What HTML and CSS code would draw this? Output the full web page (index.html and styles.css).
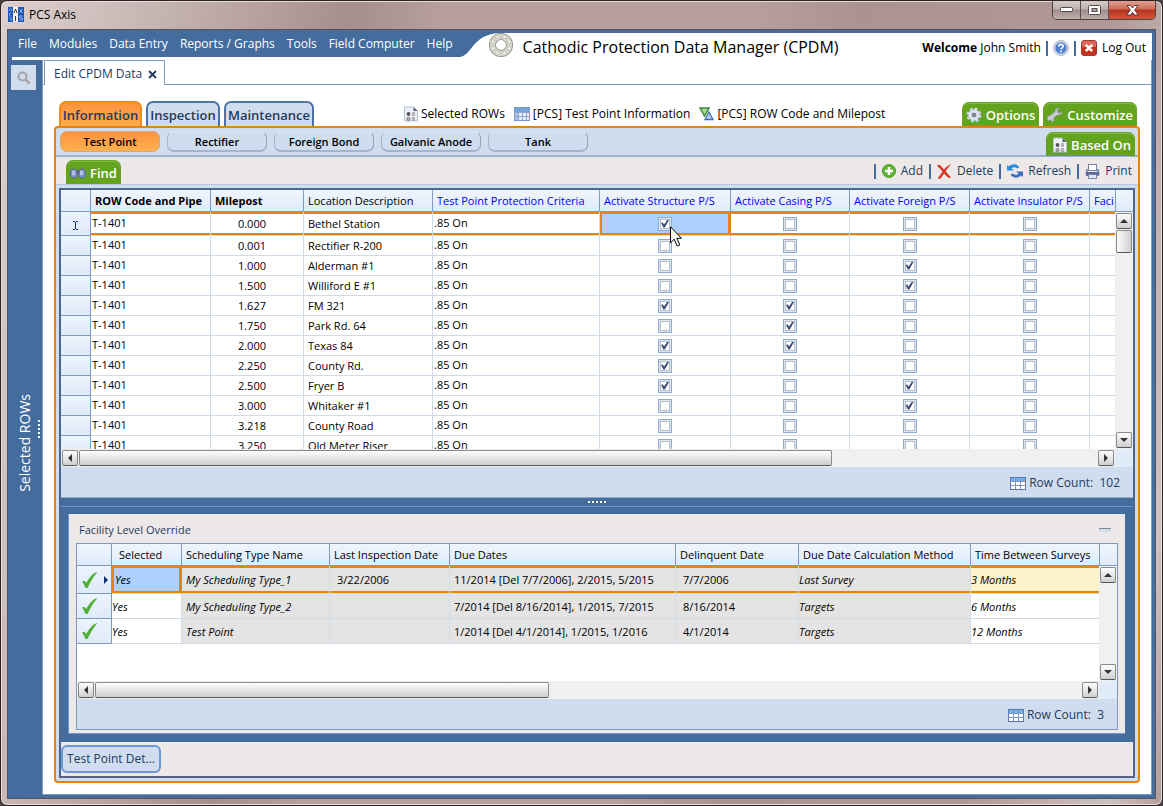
FILE: index.html
```html
<!DOCTYPE html>
<html lang="en">
<head>
    <meta charset="UTF-8">
    <meta name="viewport" content="width=device-width, initial-scale=1.0">
    <title>PCS Axis</title>
    <link rel="stylesheet" href="styles.css">
</head>
<body>
<div class="window">
    <div class="titlebar">
        <svg class="app-icon" width="16" height="16" viewBox="0 0 16 16">
            <rect width="5" height="15" fill="#1c57b8"/><rect x="5" width="5" height="15" fill="#f4f4f4"/><rect x="10" width="6" height="15" fill="#1c57b8"/>
            <path d="M1.5 4V2h2v2M3.500 6h-2v3h2M1.500 11h2v2h-2" stroke="#6f9be0" fill="none"/>
            <path d="M6 6l1.500-4L9 6M7.500 9v5" stroke="#333" fill="none"/>
            <path d="M11.500 2l3 4M14.500 2l-3 4M14.500 9h-3v2h3v2h-3" stroke="#8fb4ee" fill="none"/>
        </svg>
        <span class="app-name">PCS Axis</span>
        <div class="window-buttons">
            <button type="button" class="win-btn" aria-label="Minimize"><svg width="13" height="6" viewBox="0 0 13 6"><rect x=".5" y=".5" width="12" height="4" rx="1" fill="#fff" stroke="#55494c"/></svg></button>
            <button type="button" class="win-btn" aria-label="Maximize"><svg width="13" height="11" viewBox="0 0 13 11"><rect x=".5" y=".5" width="12" height="9" rx="1" fill="#fff" stroke="#55494c"/><rect x="4" y="3.500" width="5" height="3" fill="#b9a5a5" stroke="#55494c"/></svg></button>
            <button type="button" class="win-btn win-close" aria-label="Close"><svg width="13" height="11" viewBox="0 0 13 11"><path d="M1 .5h3.500l2 2.500 2-2.500H12L8.700 5l3.500 5H8.500l-2-2.700-2 2.700H.8L4.300 5z" fill="#fff" stroke="#5a3a3c"/></svg></button>
        </div>
    </div>

    <div class="client">
        <header class="header">
            <nav class="menu">
                <a href="#">File</a>
                <a href="#">Modules</a>
                <a href="#">Data Entry</a>
                <a href="#">Reports / Graphs</a>
                <a href="#">Tools</a>
                <a href="#">Field Computer</a>
                <a href="#">Help</a>
            </nav>
            <svg class="swoosh" width="40" height="24" viewBox="0 0 40 24"><path d="M0 0h40C26 1 20 6 14 13 10 18 6 24 0 24z" fill="#446c9d"/></svg>
            <svg class="flange" width="24" height="24" viewBox="0 0 24 24">
                <circle cx="12" cy="12" r="8.500" fill="none" stroke="#8b8b82" stroke-width="7"/>
                <circle cx="12" cy="12" r="8.500" fill="none" stroke="#d3d4c8" stroke-width="5.500"/>
                <g fill="#fff" stroke="#b2b3a8" stroke-width=".5"><circle cx="15.400" cy="3.800" r="1.400"/><circle cx="20.200" cy="8.600" r="1.400"/><circle cx="20.200" cy="15.400" r="1.400"/><circle cx="15.400" cy="20.200" r="1.400"/><circle cx="8.600" cy="20.200" r="1.400"/><circle cx="3.800" cy="15.400" r="1.400"/><circle cx="3.800" cy="8.600" r="1.400"/><circle cx="8.600" cy="3.800" r="1.400"/></g>
            </svg>
            <h1>Cathodic Protection Data Manager (CPDM)</h1>
            <div class="user-area">
                <span><b>Welcome</b> John Smith</span>
                <i class="sep"></i>
                <button type="button" class="icon-btn" aria-label="Help">
                    <svg width="16" height="16" viewBox="0 0 16 16"><circle cx="8" cy="8" r="7.500" fill="#d5d9e2" stroke="#b8bdc9"/><circle cx="8" cy="8" r="5.700" fill="#4f7fd6"/><path d="M5.800 6.500C5.800 3.700 10.300 3.800 10.200 6.300 10.100 7.800 8 7.800 8 9.600" fill="none" stroke="#fff" stroke-width="1.600"/><circle cx="8" cy="11.600" r="1" fill="#fff"/></svg>
                </button>
                <i class="sep"></i>
                <a href="#" class="logout">
                    <svg width="16" height="16" viewBox="0 0 16 16"><rect x=".5" y=".5" width="15" height="15" rx="2.500" fill="#c5301f" stroke="#a33a30"/><path d="M1 3a2 2 0 0 1 2-2h10a2 2 0 0 1 2 2v4H1z" fill="#dc6a5a"/><path d="M4.800 4.800l6.400 6.400M11.200 4.800l-6.400 6.400" stroke="#fff" stroke-width="2.600"/></svg>
                    Log Out
                </a>
            </div>
        </header>
        <div class="strip"></div>

        <div class="main-row">
            <aside class="sidebar">
                <button type="button" class="search-btn" aria-label="Search">
                    <svg width="14" height="14" viewBox="0 0 14 14" fill="none" stroke="#a3a5a8"><circle cx="5.500" cy="5.500" r="4" stroke-width="2"/><path d="M8.500 8.500l4 4" stroke-width="2.600"/></svg>
                </button>
                <span class="side-label">Selected ROWs</span>
                <i class="side-grip"></i>
            </aside>

            <main class="content">
                <div class="doc-tabs">
                    <div class="doc-tab">
                        <span>Edit CPDM Data</span>
                        <button type="button" class="close-tab" aria-label="Close tab"><svg width="9" height="9" viewBox="0 0 9 9"><path d="M1 1l7 7M8 1L1 8" stroke="#1f3a5f" stroke-width="1.800"/></svg></button>
                    </div>
                </div>

                <div class="top-bar">
                    <button type="button" class="tab tab-info active">Information</button>
                    <button type="button" class="tab tab-insp">Inspection</button>
                    <button type="button" class="tab tab-maint">Maintenance</button>
                    <div class="links">
                        <a href="#"><svg width="14" height="16" viewBox="0 0 14 16"><path d="M.5 1h9l4 4v10H.5z" fill="#eef2f8" stroke="#b4c0d0"/><path d="M9.500 1l4 4h-4z" fill="#4a6078"/><circle cx="4.500" cy="8" r="1.900" fill="#555"/><circle cx="4.500" cy="13" r="1.600" fill="#bbb" stroke="#777"/><path d="M8 7h3M8 9h3M8 12h3M8 14h3" stroke="#777"/></svg>Selected ROWs</a>
                        <a href="#"><svg width="16" height="14" viewBox="0 0 16 14"><rect x=".5" y=".5" width="15" height="13" fill="#e8eef8" stroke="#7a9bc6"/><path d="M1 1h14v4H1z" fill="#6fa3dc"/><path d="M1 5h4v8H1z" fill="#a9c4e8"/><path d="M0 5.500h16M0 9.500h16M4.500 1v12M8.500 1v12M12.500 1v12" stroke="#8aa5cf"/></svg>[PCS] Test Point Information</a>
                        <a href="#"><svg width="15" height="14" viewBox="0 0 15 14"><path d="M1 1h9L5.500 9z" fill="#aad89a" stroke="#3d8c3a" stroke-width="1.500"/><path d="M10 5l4 7.500H6z" fill="#b9cdee" stroke="#4a6fb0" stroke-width="1.300"/></svg>[PCS] ROW Code and Milepost</a>
                    </div>
                    <button type="button" class="green-tab"><svg width="16" height="16" viewBox="0 0 16 16"><circle cx="8" cy="8" r="6" fill="none" stroke="#c9cde6" stroke-width="3" stroke-dasharray="2.700 2"/><circle cx="8" cy="8" r="4" fill="none" stroke="#dcdff0" stroke-width="3.500"/><circle cx="8" cy="8" r="2" fill="#7b84b0"/></svg>Options</button>
                    <button type="button" class="green-tab"><svg width="16" height="16" viewBox="0 0 16 16"><path d="M15 4.500l-2.600 1.700-2-1.200.1-2.300L13 1.200C10.500.4 8 2 7.700 5L3 8.700c-3-.3-3.500 4-1 5.300l1.600-1.200 1 .7-.2 1.700c2.500-.5 2.800-2.400 2.200-4.200L10.500 8c3 .3 4.800-1.300 4.500-3.500z" fill="#c9ccd6" stroke="#8b93a0" stroke-width=".6"/></svg>Customize</button>
                </div>

                <div class="panel">
                    <div class="sub-bar">
                        <button type="button" class="sub-tab active">Test Point</button>
                        <button type="button" class="sub-tab">Rectifier</button>
                        <button type="button" class="sub-tab">Foreign Bond</button>
                        <button type="button" class="sub-tab">Galvanic Anode</button>
                        <button type="button" class="sub-tab">Tank</button>
                        <button type="button" class="green-tab based-on"><svg width="14" height="16" viewBox="0 0 14 16"><path d="M.5 1h9l4 4v10H.5z" fill="#eef2f8" stroke="#b4c0d0"/><path d="M9.500 1l4 4h-4z" fill="#4a6078"/><circle cx="4.500" cy="8" r="1.900" fill="#555"/><circle cx="4.500" cy="13" r="1.600" fill="#bbb" stroke="#777"/><path d="M8 7h3M8 9h3M8 12h3M8 14h3" stroke="#777"/></svg>Based On</button>
                    </div>

                    <div class="tool-bar">
                        <button type="button" class="green-tab find"><svg width="16" height="12" viewBox="0 0 16 12"><ellipse cx="4" cy="6.500" rx="3.500" ry="4.500" fill="#7f95c4" stroke="#4f6190"/><ellipse cx="12" cy="6.500" rx="3.500" ry="4.500" fill="#7f95c4" stroke="#4f6190"/><ellipse cx="3.500" cy="6" rx="1.500" ry="2.500" fill="#b9c8e8"/><ellipse cx="11.500" cy="6" rx="1.500" ry="2.500" fill="#b9c8e8"/><rect x="6.500" y="3" width="3" height="4" rx="1" fill="#56678c"/></svg>Find</button>
                        <div class="actions">
                            <i class="sep"></i>
                            <button type="button"><svg width="14" height="14" viewBox="0 0 14 14"><circle cx="7" cy="7" r="6.500" fill="#5cb531" stroke="#469a28"/><path d="M7 3v8M3 7h8" stroke="#fff" stroke-width="2.600"/></svg>Add</button>
                            <i class="sep"></i>
                            <button type="button"><svg width="15" height="15" viewBox="0 0 15 15"><path d="M0 1.500C1 .5 2.500.5 3.500 1.500L7 5.500C9 3 11.500 1 14.500 0 12 2.500 10 4.800 8.500 7.200L14 13.500c-1.500.8-2.500.5-3.500-.5L7 9.500 4 14c-1 1-2.300 1-3.300.5L5.500 7.500z" fill="#d9321f"/></svg>Delete</button>
                            <i class="sep"></i>
                            <button type="button"><svg width="16" height="14" viewBox="0 0 16 14"><path d="M0 1l2 1.500C5-.5 10-.5 12.500 3.500L10 4.500C8 2.500 6 3 4.500 4.500L7 6.500H0z" fill="#2a8ce0"/><path d="M16 13l-2-1.500c-3 3-8 3-10.500-1L6 9.500c2 2 4 1.500 5.500 0L9 7.500h7z" fill="#3b6fc4"/></svg>Refresh</button>
                            <i class="sep"></i>
                            <button type="button"><svg width="15" height="15" viewBox="0 0 15 15"><rect x="3.500" y=".5" width="8" height="6" fill="#fff" stroke="#7584a8"/><path d="M1 5h2v3h9V5h2l.5 6h-14z" fill="#8795bd"/><rect x="1" y="8" width="13" height="4" rx="1" fill="#5b6c9c"/><rect x="3.500" y="10.500" width="8" height="4" fill="#dfe6f4" stroke="#7584a8"/></svg>Print</button>
                        </div>
                    </div>

                    <div class="work-area">
                        <section class="grid">
                            <div class="viewport">
                                <table class="points">
                                    <colgroup>
                                        <col class="c-head"><col class="c-code"><col class="c-mile"><col class="c-loc"><col class="c-crit"><col class="c-struct"><col class="c-casing"><col class="c-foreign"><col class="c-insul"><col>
                                    </colgroup>
                                    <thead>
                                        <tr>
                                            <th></th>
                                            <th class="bold">ROW Code and Pipe</th>
                                            <th class="bold">Milepost</th>
                                            <th>Location Description</th>
                                            <th class="blue">Test Point Protection Criteria</th>
                                            <th class="blue">Activate Structure P/S</th>
                                            <th class="blue">Activate Casing P/S</th>
                                            <th class="blue">Activate Foreign P/S</th>
                                            <th class="blue">Activate Insulator P/S</th>
                                            <th class="blue">Faci</th>
                                        </tr>
                                    </thead>
                                    <tbody id="points-body"></tbody>
                                </table>
                            </div>
                            <div class="vscroll">
                                <div class="vscroll-head"></div>
                                <button type="button" class="arrow up" aria-label="Scroll up"></button>
                                <div class="v-thumb"></div>
                                <button type="button" class="arrow down" aria-label="Scroll down"></button>
                            </div>
                            <div class="hscroll">
                                <button type="button" class="arrow left" aria-label="Scroll left"></button>
                                <div class="track"><div class="h-thumb wide"></div></div>
                                <button type="button" class="arrow right" aria-label="Scroll right"></button>
                            </div>
                            <div class="corner"></div>
                        </section>
                        <div class="row-count first">
                            <svg width="16" height="13" viewBox="0 0 16 13"><rect x=".5" y=".5" width="15" height="12" fill="#fff" stroke="#5a74b0"/><path d="M1 1h14v3H1z" fill="#6fb4e4"/><path d="M0 4.500h16M0 8.500h16M5.500 2v10M10.500 2v10" stroke="#7f93c4"/></svg>
                            Row Count:&nbsp; 102
                        </div>

                        <div class="splitter"><i class="grip"></i></div>

                        <div class="lower">
                            <section class="override">
                                <div class="override-head">
                                    <h2>Facility Level Override</h2>
                                    <button type="button" class="collapse" aria-label="Collapse"></button>
                                </div>
                                <div class="override-box">
                                    <div class="grid">
                                        <div class="viewport">
                                            <table class="schedule">
                                                <colgroup>
                                                    <col class="s-head"><col class="s-sel"><col class="s-name"><col class="s-last"><col class="s-due"><col class="s-del"><col class="s-calc"><col>
                                                </colgroup>
                                                <thead>
                                                    <tr>
                                                        <th></th>
                                                        <th>Selected</th>
                                                        <th>Scheduling Type Name</th>
                                                        <th>Last Inspection Date</th>
                                                        <th>Due Dates</th>
                                                        <th>Delinquent Date</th>
                                                        <th>Due Date Calculation Method</th>
                                                        <th>Time Between Surveys</th>
                                                    </tr>
                                                </thead>
                                                <tbody>
                                                    <tr class="current">
                                                        <td class="row-head"><svg width="18" height="18" viewBox="0 0 18 18"><path d="M1 10.500C2.500 9.500 4 9.500 5.300 12 8.500 6 12 2 16.500 1 12.500 5.500 9.500 10.500 6.500 17H4.500C3.500 14.500 2.500 12.500 1 10.500z" fill="#4eb034"/></svg><i class="marker"></i></td>
                                                        <td class="edit focus">Yes</td>
                                                        <td class="name">My Scheduling Type_1</td>
                                                        <td class="date">3/22/2006</td>
                                                        <td>11/2014 [Del 7/7/2006], 2/2015, 5/2015</td>
                                                        <td class="date">7/7/2006</td>
                                                        <td class="method">Last Survey</td>
                                                        <td class="edit pending">3 Months</td>
                                                    </tr>
                                                    <tr>
                                                        <td class="row-head"><svg width="18" height="18" viewBox="0 0 18 18"><path d="M1 10.500C2.500 9.500 4 9.500 5.300 12 8.500 6 12 2 16.500 1 12.500 5.500 9.500 10.500 6.500 17H4.500C3.500 14.500 2.500 12.500 1 10.500z" fill="#4eb034"/></svg></td>
                                                        <td class="edit">Yes</td>
                                                        <td class="name">My Scheduling Type_2</td>
                                                        <td class="date"></td>
                                                        <td>7/2014 [Del 8/16/2014], 1/2015, 7/2015</td>
                                                        <td class="date">8/16/2014</td>
                                                        <td class="method">Targets</td>
                                                        <td class="edit">6 Months</td>
                                                    </tr>
                                                    <tr>
                                                        <td class="row-head"><svg width="18" height="18" viewBox="0 0 18 18"><path d="M1 10.500C2.500 9.500 4 9.500 5.300 12 8.500 6 12 2 16.500 1 12.500 5.500 9.500 10.500 6.500 17H4.500C3.500 14.500 2.500 12.500 1 10.500z" fill="#4eb034"/></svg></td>
                                                        <td class="edit">Yes</td>
                                                        <td class="name">Test Point</td>
                                                        <td class="date"></td>
                                                        <td>1/2014 [Del 4/1/2014], 1/2015, 1/2016</td>
                                                        <td class="date">4/1/2014</td>
                                                        <td class="method">Targets</td>
                                                        <td class="edit">12 Months</td>
                                                    </tr>
                                                </tbody>
                                            </table>
                                        </div>
                                        <div class="vscroll">
                                            <div class="vscroll-head"></div>
                                            <button type="button" class="arrow up" aria-label="Scroll up"></button>
                                            <button type="button" class="arrow down" aria-label="Scroll down"></button>
                                        </div>
                                        <div class="hscroll">
                                            <button type="button" class="arrow left" aria-label="Scroll left"></button>
                                            <div class="track"><div class="h-thumb"></div></div>
                                            <button type="button" class="arrow right" aria-label="Scroll right"></button>
                                        </div>
                                        <div class="corner"></div>
                                    </div>
                                    <div class="row-count">
                                        <svg width="16" height="13" viewBox="0 0 16 13"><rect x=".5" y=".5" width="15" height="12" fill="#fff" stroke="#5a74b0"/><path d="M1 1h14v3H1z" fill="#6fb4e4"/><path d="M0 4.500h16M0 8.500h16M5.500 2v10M10.500 2v10" stroke="#7f93c4"/></svg>
                                        Row Count:&nbsp; 3
                                    </div>
                                </div>
                            </section>
                        </div>

                        <div class="details-bar">
                            <button type="button" class="details-btn">Test Point Det...</button>
                        </div>
                    </div>
                </div>
            </main>
        </div>
    </div>
</div>
<script src="script.js"></script>
</body>
</html>
```
FILE: styles.css
```css
* {
    margin: 0;
    padding: 0;
    box-sizing: border-box;
}
body {
    font-family: 'Open Sans', 'Noto Sans', sans-serif;
    font-size: 12px;
    line-height: 16px;
    color: #000;
    background-color: #4a4244;
}
button {
    font: inherit;
    color: inherit;
    background: none;
    border: none;
    cursor: pointer;
}
a {
    color: inherit;
    text-decoration: none;
}
svg {
    display: block;
    flex: none;
}

/* window frame */
.window {
    height: 100vh;
    min-height: 620px;
    display: flex;
    flex-direction: column;
    padding: 0 6px 6px;
    border: 1px solid #2b2022;
    border-radius: 7px;
    background: linear-gradient(100deg, #dccfcd 0, #cdbfbc 8%, #b7a19c 20%, #a58f8b 27%, #b7a09b 34%, #b7a09b 58%, #ab948f 66%, #b09994 85%, #cfc2c0 96%, #b39d98 100%);
    box-shadow: inset 0 0 0 1px #e9dedc;
}
.titlebar {
    height: 28px;
    flex: none;
    display: flex;
    align-items: flex-start;
}
.app-icon {
    margin: 6px 5px 0 1px;
}
.app-name {
    margin-top: 6px;
}
.window-buttons {
    margin-left: auto;
    display: flex;
    border: 1px solid #4c4043;
    border-top: none;
    border-radius: 0 0 5px 5px;
    overflow: hidden;
}
.win-btn {
    width: 28px;
    height: 18px;
    display: flex;
    align-items: center;
    justify-content: center;
    border-right: 1px solid #5c4f51;
    background: linear-gradient(#d6cbca 0, #bfb0ae 45%, #a08d8c 50%, #bfaeac 100%);
}
.win-close {
    width: 46px;
    border-right: none;
    background: linear-gradient(#e3a193 0, #cf6a56 45%, #b5331c 50%, #d2573f 100%);
}
.client {
    flex: 1;
    min-height: 0;
    display: flex;
    flex-direction: column;
    padding: 0 3px 3px 0;
    border: 1px solid #5d5158;
    background-color: #446c9d;
}

/* header */
.header {
    flex: none;
    height: 27px;
    display: flex;
    border-top: 3px solid #446c9d;
    background-color: #fff;
}
.menu {
    display: flex;
    gap: 12px;
    padding: 3px 6px 0 10px;
    background-color: #446c9d;
    color: #fff;
    white-space: nowrap;
}
.flange {
    margin-left: -10px;
}
.header h1 {
    margin-left: 10px;
    font-size: 16px;
    line-height: 28px;
    font-weight: normal;
    white-space: nowrap;
}
.user-area {
    margin: 6px 6px 0 auto;
    display: flex;
    align-items: center;
    height: 18px;
    gap: 5px;
    white-space: nowrap;
}
.sep {
    width: 2px;
    height: 15px;
    background-color: #446c9d;
}
.logout {
    display: flex;
    gap: 5px;
}
.strip {
    flex: none;
    height: 3px;
    margin-left: 4px;
    background-color: #fff;
}

/* sidebar */
.main-row {
    flex: 1;
    min-height: 0;
    display: flex;
}
.sidebar {
    position: relative;
    flex: none;
    width: 34px;
    display: flex;
    flex-direction: column;
    align-items: center;
}
.search-btn {
    width: 25px;
    height: 25px;
    margin: 5px 3px 0 0;
    display: flex;
    align-items: center;
    justify-content: center;
    background-color: #d0ddee;
}
.side-label {
    margin: auto 0;
    writing-mode: vertical-rl;
    transform: rotate(180deg);
    color: #fff;
    font-size: 14px;
}
.side-grip {
    position: absolute;
    right: 2px;
    top: 50%;
    width: 2px;
    height: 20px;
    margin-top: -8px;
    background: repeating-linear-gradient(#fff 0 2px, transparent 2px 4px);
}

/* content */
.content {
    flex: 1;
    min-width: 0;
    display: flex;
    flex-direction: column;
    border: 1px solid #7f9cc0;
    border-top: none;
    background-color: #fff;
}
.doc-tabs {
    flex: none;
    display: flex;
    height: 25px;
    border-bottom: 1px solid #8099bd;
}
.doc-tab {
    height: 25px;
    width: 121px;
    margin-left: 1px;
    padding: 2px 7px 0 9px;
    display: flex;
    align-items: center;
    justify-content: space-between;
    border: 1px solid #8099bd;
    border-bottom: none;
    background-color: #fff;
    color: #1f3a5f;
    white-space: nowrap;
}
.close-tab {
    display: flex;
}
.top-bar {
    flex: none;
    display: flex;
    align-items: flex-end;
    gap: 4px;
    height: 41px;
    padding: 0 14px 0 16px;
}
.tab {
    height: 25px;
    border: 2px solid #4b73a6;
    border-bottom: none;
    border-radius: 7px 7px 0 0;
    background-color: #d0ddee;
    color: #1f3a5f;
    font-size: 13px;
    font-weight: 600;
    white-space: nowrap;
}
.tab-info {
    width: 83px;
}
.tab-insp {
    width: 74px;
}
.tab-maint {
    width: 90px;
}
.tab.active {
    border-color: #f08a1c;
    background: linear-gradient(#fd9340, #ffab47);
}
.links {
    flex: 1;
    display: flex;
    gap: 9px;
    height: 25px;
    align-items: center;
    padding-left: 86px;
    white-space: nowrap;
}
.links a {
    display: flex;
    align-items: center;
    gap: 3px;
}
.green-tab {
    display: flex;
    align-items: center;
    gap: 4px;
    height: 24px;
    padding: 0 3px;
    border: 1px solid #64a31d;
    border-bottom: none;
    border-radius: 7px 7px 0 0;
    background-color: #64a31d;
    box-shadow: inset 0 1px 0 #82ba42;
    color: #fff;
    font-size: 13px;
    font-weight: 600;
    white-space: nowrap;
}

/* orange panel */
.panel {
    flex: 1;
    min-height: 0;
    margin: 0 11px 11px;
    display: flex;
    flex-direction: column;
    border: 2px solid #e8830e;
    border-radius: 4px;
    background-color: #d0ddee;
}
.sub-bar {
    flex: none;
    display: flex;
    gap: 7px;
    height: 29px;
    padding: 3px 3px 0 4px;
    border-bottom: 2px solid #9db3cb;
}
.sub-tab {
    width: 100px;
    height: 21px;
    border: 1px solid #a4b6ce;
    border-top-color: #dce8f5;
    border-right-color: #8fa3bd;
    border-bottom: 2px solid #a4b6ce;
    border-radius: 7px;
    background-color: #d0ddee;
    font-size: 11px;
    font-weight: 600;
    line-height: 17px;
}
.sub-tab.active {
    border: 1px solid #d9a878;
    background: linear-gradient(#fd9340, #ffb04d);
}
.based-on {
    margin: 1px 0 0 auto;
    padding: 0 3px 0 6px;
}
.tool-bar {
    flex: none;
    display: flex;
    align-items: flex-end;
    justify-content: space-between;
    height: 28px;
    padding: 0 6px 0 10px;
    border-bottom: 1px solid #b5c7dd;
    background-color: #ece9e8;
}
.actions {
    display: flex;
    align-items: center;
    gap: 6px;
    height: 26px;
    color: #1f3a5f;
}
.actions button {
    display: flex;
    align-items: center;
    gap: 5px;
}
.work-area {
    flex: 1;
    min-height: 0;
    margin: 3px;
    display: flex;
    flex-direction: column;
    border: 2px solid #4d6591;
    background-color: #ece9e8;
}

/* grids */
.grid {
    display: grid;
    grid-template-columns: minmax(0, 1fr) 18px;
    grid-template-rows: minmax(0, 1fr) 18px;
    background-color: #fff;
}
.work-area > .grid {
    flex: 1;
    min-height: 0;
}
.viewport {
    overflow: hidden;
}
table {
    width: 100%;
    table-layout: fixed;
    border-collapse: separate;
    border-spacing: 0;
    font-size: 11px;
    line-height: 15px;
}
th {
    height: 22px;
    padding: 0 4px;
    border-right: 1px solid #7f9abd;
    border-bottom: 1px solid #7f9abd;
    background: linear-gradient(#eff5fd, #dfebf9);
    font-weight: normal;
    text-align: left;
    white-space: nowrap;
}
th:last-child {
    overflow: hidden;
}
th.bold {
    font-weight: bold;
}
th.blue {
    color: #0000ff;
}
td {
    height: 20px;
    padding: 0 4px;
    border-right: 1px solid #d0dae8;
    border-bottom: 1px solid #d0dae8;
    white-space: nowrap;
}
th:last-child,
td:last-child {
    border-right: none;
}
td.row-head {
    border-right: 1px solid #7f9abd;
    border-bottom: 1px solid #7f9abd;
    background: linear-gradient(#ecf4fd, #dfeaf8);
}
.c-head { width: 30px; }
.c-code { width: 120px; }
.c-mile { width: 93px; }
.c-loc { width: 129px; }
.c-crit { width: 167px; }
.c-struct { width: 131px; }
.c-casing { width: 119px; }
.c-foreign { width: 120px; }
.c-insul { width: 120px; }
.points td.row-head {
    text-align: center;
}
.points .row-head svg {
    margin: 0 auto;
}
.points .text {
    padding: 0 1px;
    vertical-align: top;
    line-height: 17px;
}
.points .mile {
    padding-right: 37px;
    text-align: right;
}
.points .check {
    position: relative;
    text-align: center;
}
.points .current td {
    height: 24px;
}
.current td:not(.row-head) {
    border-bottom-color: #d0dae8;
    box-shadow: inset 0 2px 0 #e8830e, inset 0 -2px 0 #e8830e;
}
.points .current .text {
    line-height: 22px;
}
.current td.focus:not(.row-head) {
    background-color: #aed0ff;
    border-right-color: #e8830e;
    box-shadow: inset 0 0 0 2px #e8830e;
}
input[type="checkbox"] {
    appearance: none;
    display: block;
    width: 14px;
    height: 14px;
    margin: 0 auto;
    border: 1px solid #8fabd0;
    background-color: #fff;
    box-shadow: inset 0 0 0 1px #dbe7f5, inset 0 0 0 2px #b9bec9;
}
input[type="checkbox"]:checked::before {
    content: "";
    display: block;
    width: 8px;
    height: 8px;
    margin: 2px;
    background-color: #3d4f7c;
    clip-path: polygon(0 42%, 22% 36%, 38% 62%, 80% 0, 100% 6%, 48% 100%, 28% 100%);
}
.cursor {
    position: absolute;
    left: 70px;
    top: 14px;
    z-index: 2;
}

/* scroll bars */
.vscroll {
    display: flex;
    flex-direction: column;
    align-items: center;
    padding-bottom: 1px;
    background-color: #f0f0f0;
}
.vscroll-head {
    flex: none;
    width: 100%;
    height: 22px;
    margin-bottom: 1px;
    border-left: 1px solid #7f9abd;
    border-bottom: 1px solid #7f9abd;
    background: linear-gradient(#eff5fd, #dfebf9);
}
.hscroll {
    display: flex;
    align-items: center;
    gap: 1px;
    padding: 0 1px;
    background-color: #f0f0f0;
}
.track {
    flex: 1;
}
.arrow {
    flex: none;
    width: 16px;
    height: 16px;
    display: flex;
    align-items: center;
    justify-content: center;
    border: 1px solid #8a8a8a;
    border-bottom-color: #555;
    border-radius: 2px;
    background: linear-gradient(#fdfdfd, #cfcfcf);
}
.arrow::before {
    content: "";
    border: 4px solid transparent;
}
.arrow.up::before {
    border-top: none;
    border-bottom-color: #333;
}
.arrow.down::before {
    border-bottom: none;
    border-top-color: #333;
}
.arrow.left::before {
    border-left: none;
    border-right-color: #333;
}
.arrow.right::before {
    border-right: none;
    border-left-color: #333;
}
.arrow.down {
    margin-top: auto;
}
.v-thumb {
    width: 16px;
    height: 23px;
    margin-top: 1px;
    border: 1px solid #8a8a8a;
    border-bottom-color: #555;
    border-radius: 2px;
    background: linear-gradient(90deg, #fdfdfd, #cfcfcf);
}
.h-thumb {
    width: 46%;
    height: 16px;
    border: 1px solid #8a8a8a;
    border-bottom-color: #555;
    border-radius: 2px;
    background: linear-gradient(#fdfdfd, #cfcfcf);
}
.h-thumb.wide {
    width: 74%;
}
.corner {
    background-color: #e0ecfa;
}
.row-count {
    flex: none;
    display: flex;
    align-items: center;
    justify-content: flex-end;
    gap: 3px;
    height: 30px;
    padding: 2px 13px 0 0;
    background-color: #d0ddee;
    color: #1f3a5f;
}
.row-count.first {
    height: 31px;
    border-bottom: 1px solid #8fa9c8;
}

/* lower pane */
.splitter {
    flex: none;
    display: flex;
    justify-content: center;
    height: 9px;
    padding-top: 3px;
    border-bottom: 1px solid #6b97d6;
    background-color: #446c9d;
}
.grip {
    width: 18px;
    height: 2px;
    background: repeating-linear-gradient(90deg, #fff 0 2px, transparent 2px 4px);
}
.lower {
    flex: none;
    padding: 7px 8px 8px 7px;
    background-color: #446c9d;
}
.override {
    padding: 0 7px 3px;
    border-left: 1px solid #6b97d6;
    border-bottom: 1px solid #6b97d6;
    background-color: #ece9e8;
}
.override-head {
    display: flex;
    align-items: center;
    justify-content: space-between;
    height: 29px;
    padding: 3px 7px 0 3px;
}
.override h2 {
    color: #1f3a5f;
    font-size: 11px;
    font-weight: normal;
}
.collapse {
    width: 12px;
    height: 4px;
    border-top: 1px solid #868686;
    background-color: #d0ddee;
}
.override-box {
    border: 1px solid #7f9abd;
}
.override-box .viewport {
    min-height: 137px;
}
.s-head { width: 35px; }
.s-sel { width: 70px; }
.s-name { width: 148px; }
.s-last { width: 120px; }
.s-due { width: 226px; }
.s-del { width: 123px; }
.s-calc { width: 172px; }
.schedule th:nth-child(2) {
    padding-left: 7px;
}
.schedule td {
    height: 25px;
    background-color: #e4e4e4;
}
.schedule .current td {
    height: 28px;
}
.schedule td.row-head {
    padding-left: 4px;
    background: linear-gradient(#ecf4fd, #dfeaf8);
}
.row-head svg {
    display: inline-block;
    vertical-align: middle;
}
.marker {
    display: inline-block;
    margin-left: 5px;
    vertical-align: middle;
    border: 4px solid transparent;
    border-left-color: #12306a;
    border-right: none;
}
.schedule td.edit {
    padding: 0;
    background-color: #fff;
    font-style: italic;
}
.schedule td.name {
    font-style: italic;
}
.schedule td.date {
    padding-left: 7px;
}
.schedule td.method {
    padding-left: 0;
    font-style: italic;
}
.schedule td.pending {
    background-color: #fdf2cc;
}
.schedule .current td.focus {
    padding-left: 3px;
    background-color: #aed0ff;
}
.details-bar {
    flex: none;
    height: 34px;
    padding-top: 3px;
}
.details-btn {
    height: 28px;
    width: 100px;
    border: 2px solid #6b97d6;
    border-radius: 6px;
    background-color: #d0ddee;
    color: #1f3a5f;
    white-space: nowrap;
}
```
FILE: script.js
```js
// code, milepost, location, criteria, [structure, casing, foreign, insulator]
var points = [
    ['T-1401', '0.000', 'Bethel Station', '.85 On', [1, 0, 0, 0]],
    ['T-1401', '0.001', 'Rectifier R-200', '.85 On', [0, 0, 0, 0]],
    ['T-1401', '1.000', 'Alderman #1', '.85 On', [0, 0, 1, 0]],
    ['T-1401', '1.500', 'Williford E #1', '.85 On', [0, 0, 1, 0]],
    ['T-1401', '1.627', 'FM 321', '.85 On', [1, 1, 0, 0]],
    ['T-1401', '1.750', 'Park Rd. 64', '.85 On', [0, 1, 0, 0]],
    ['T-1401', '2.000', 'Texas 84', '.85 On', [1, 1, 0, 0]],
    ['T-1401', '2.250', 'County Rd.', '.85 On', [1, 0, 0, 0]],
    ['T-1401', '2.500', 'Fryer B', '.85 On', [1, 0, 1, 0]],
    ['T-1401', '3.000', 'Whitaker #1', '.85 On', [0, 0, 1, 0]],
    ['T-1401', '3.218', 'County Road', '.85 On', [0, 0, 0, 0]],
    ['T-1401', '3.250', 'Old Meter Riser', '.85 On', [0, 0, 0, 0]]
];
var flags = ['Activate Structure P/S', 'Activate Casing P/S', 'Activate Foreign P/S', 'Activate Insulator P/S'];

var editMark = '<svg width="7" height="9" viewBox="0 0 7 9"><path d="M1 .5h2M4 .5h2M3.500 1v7M1 8.500h2M4 8.500h2" stroke="#12306a" fill="none"/></svg>';
var pointer = '<svg class="cursor" width="12" height="21" viewBox="0 0 12 21"><path d="M.5 .8v16l3.700-3.600 3 6.800 2.600-1.200-3-6.500h4.700z" fill="#fff" stroke="#000"/></svg>';

document.getElementById('points-body').innerHTML = points.map(function (p, row) {
    var checks = p[4].map(function (on, i) {
        var focus = row === 0 && i === 0;
        return '<td class="check' + (focus ? ' focus' : '') + '">' +
            '<input type="checkbox" aria-label="' + flags[i] + ', ' + p[2] + '"' + (on ? ' checked' : '') + '>' +
            (focus ? pointer : '') + '</td>';
    }).join('');
    return '<tr' + (row === 0 ? ' class="current"' : '') + '>' +
        '<td class="row-head">' + (row === 0 ? editMark : '') + '</td>' +
        '<td class="text">' + p[0] + '</td>' +
        '<td class="mile">' + p[1] + '</td>' +
        '<td>' + p[2] + '</td>' +
        '<td class="text">' + p[3] + '</td>' +
        checks + '<td></td></tr>';
}).join('');
```
